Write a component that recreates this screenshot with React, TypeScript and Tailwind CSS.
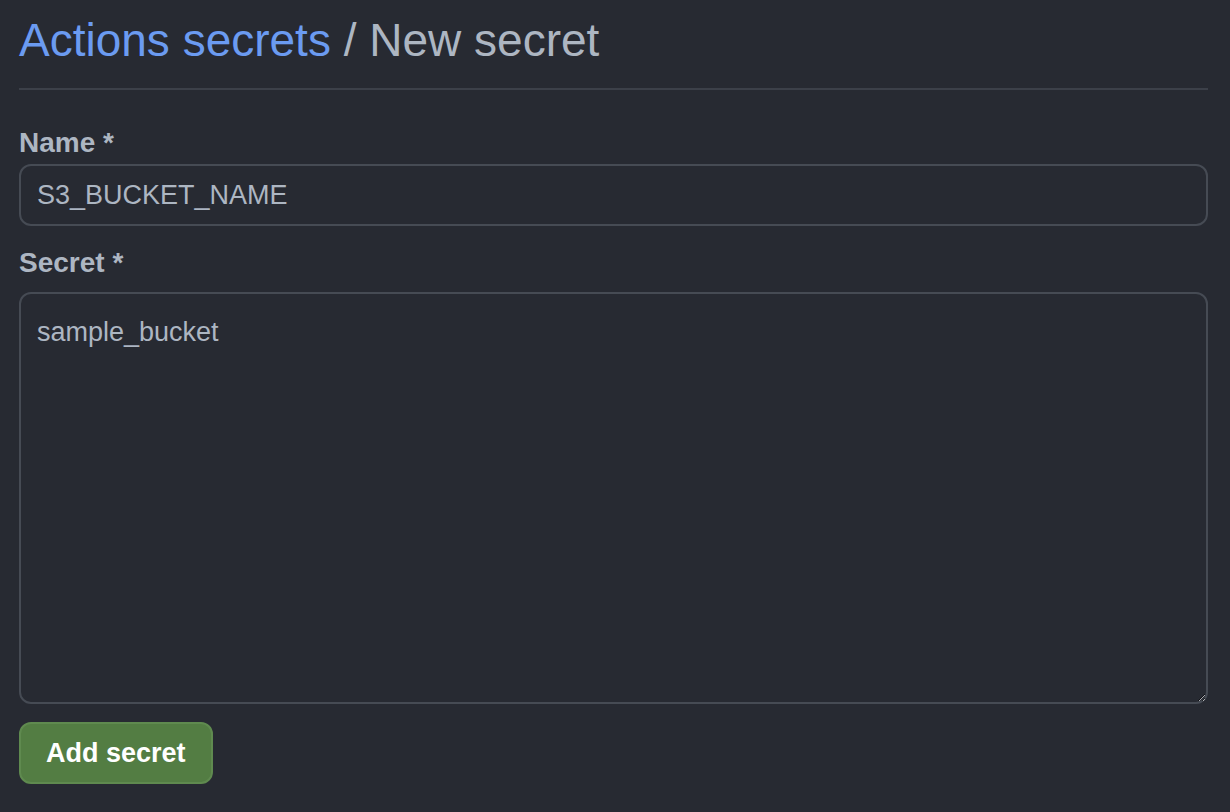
export default function App() {
  return (
    <div className="min-h-[812px] w-full bg-[#272a32] font-['Liberation_Sans',Arial,sans-serif] text-[#adb6c2]">
      <div className="pl-[19px] pr-[22px] pt-[14px]">
        <h1 className="border-b-2 border-[#3c4049] pb-[22px] text-[46px] leading-[52px] font-normal">
          <a href="#" className="text-[#6b9bf1]">Actions secrets</a>
          <span> / New secret</span>
        </h1>
        <form className="mt-[38px]" onSubmit={(e) => e.preventDefault()}>
          <label className="block text-[28px] leading-[30px] font-bold">Name *</label>
          <input
            defaultValue="S3_BUCKET_NAME"
            className="mt-[6px] block h-[62px] w-full rounded-[12px] border-2 border-[#464b54] bg-transparent px-[16px] text-[27px] text-[#adb6c2] outline-none"
          />
          <label className="mt-[22px] block text-[28px] leading-[30px] font-bold">Secret *</label>
          <textarea
            defaultValue="sample_bucket"
            className="mt-[14px] block h-[412px] w-full resize-y rounded-[12px] border-2 border-[#464b54] bg-transparent px-[16px] py-[22px] text-[27px] leading-[32px] text-[#adb6c2] outline-none"
          />
          <button
            type="submit"
            className="mt-[18px] h-[62px] rounded-[12px] border-2 border-[#5f8a4f] bg-[#537d43] px-[25px] text-[27px] font-bold text-white"
          >
            Add secret
          </button>
        </form>
      </div>
    </div>
  )
}
